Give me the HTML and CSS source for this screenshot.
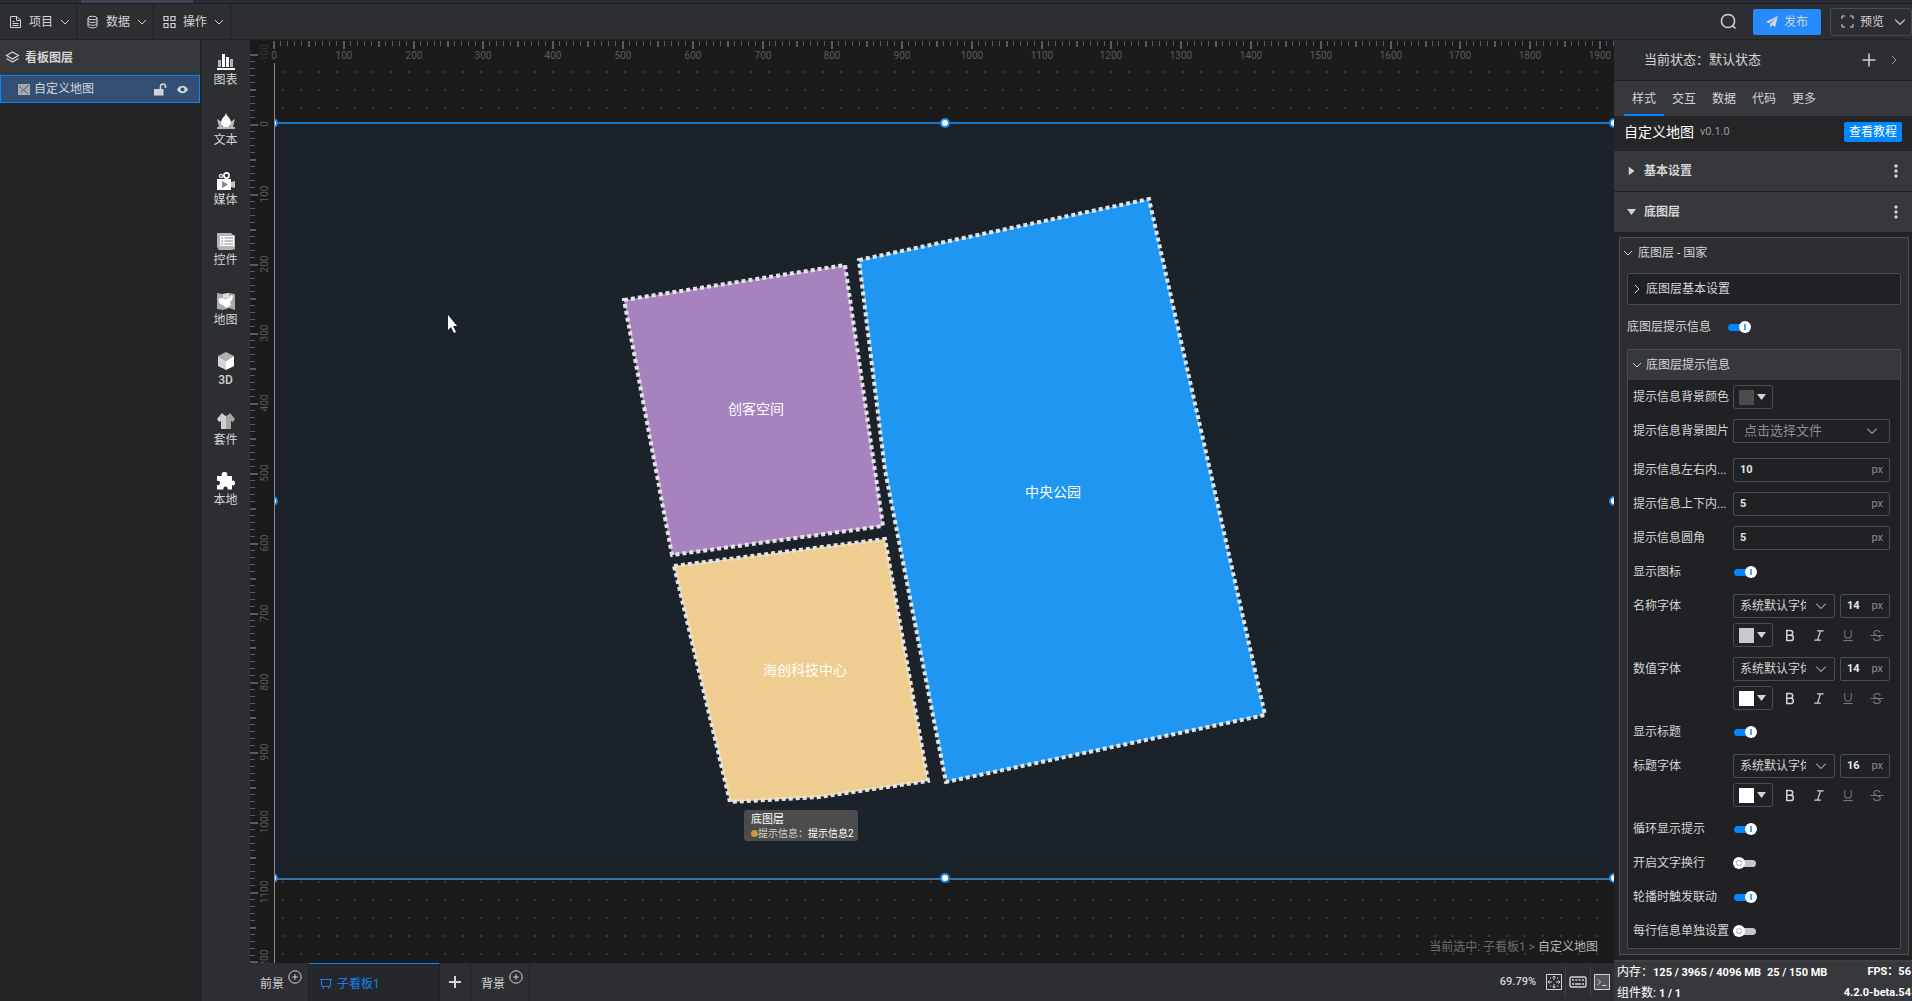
FILE: index.html
```html
<!DOCTYPE html>
<html lang="zh-CN">
<head>
    <meta charset="UTF-8">
    <meta name="viewport" content="width=device-width, initial-scale=1.0">
    <title>自定义地图</title>
    <link rel="stylesheet" href="styles.css">
</head>
<body>
    <!-- shared icons -->
    <svg class="sprite" aria-hidden="true">
        <symbol id="i-down" viewBox="0 0 10 10"><path d="M1 3l4 4 4-4" fill="none" stroke="currentColor"/></symbol>
        <symbol id="i-right" viewBox="0 0 10 10"><path d="M3 1l4 4-4 4" fill="none" stroke="currentColor"/></symbol>
        <symbol id="i-dots" viewBox="0 0 4 16"><circle cx="2" cy="3" r="1.7"/><circle cx="2" cy="8" r="1.7"/><circle cx="2" cy="13" r="1.7"/></symbol>
        <symbol id="i-tri" viewBox="0 0 9 6"><path d="M0 0h9L4.5 6z"/></symbol>
        <symbol id="i-plus-circle" viewBox="0 0 14 14"><circle cx="7" cy="7" r="6.2" fill="none" stroke="currentColor"/><path d="M7 4.3v5.4M4.3 7h5.4" stroke="currentColor"/></symbol>
        <symbol id="i-bold" viewBox="0 0 12 14"><path d="M2.5 1.5v11h4.2a2.9 2.9 0 0 0 0-5.8H2.5h3.8a2.6 2.6 0 0 0 0-5.2z" fill="none" stroke="currentColor" stroke-width="1.6"/></symbol>
        <symbol id="i-italic" viewBox="0 0 12 14"><path d="M4 2h7M1 12h7M7.6 2L4.4 12" fill="none" stroke="currentColor" stroke-width="1.3"/></symbol>
        <symbol id="i-under" viewBox="0 0 12 14"><path d="M2.5 1v5.5a3.5 3.5 0 0 0 7 0V1M1 12.5h10" fill="none" stroke="currentColor" stroke-width="1.1"/></symbol>
        <symbol id="i-strike" viewBox="0 0 14 14"><path d="M10.5 4C10 2.3 8.7 1.5 7 1.5S3.6 2.5 3.6 4.2c0 3.4 7 2.2 7 5.6 0 1.7-1.6 2.7-3.6 2.7S3.5 11.6 3.3 9.8M0 7h14" fill="none" stroke="currentColor" stroke-width="1.1"/></symbol>
    </svg>

    <div class="window-tabs"><span></span></div>

    <header class="topbar">
        <nav class="menus">
            <button class="menu">
                <svg width="13" height="14" viewBox="0 0 13 14" fill="none" stroke="currentColor"><path d="M1.5 1.5H8L11.5 5v7.5h-10zM7.5 1.5v4h4M3.5 6.5h2M3.5 8.5h6M3.5 10.5h6"/></svg>
                <span>项目</span><svg class="chev"><use href="#i-down"/></svg>
            </button>
            <button class="menu">
                <svg width="13" height="14" viewBox="0 0 13 14" fill="none" stroke="currentColor"><ellipse cx="6.5" cy="3" rx="4.5" ry="1.8"/><path d="M2 3v8c0 1 2 1.9 4.5 1.9S11 12 11 11V3M2 5.7c0 1 2 1.9 4.5 1.9S11 6.7 11 5.7M2 8.4c0 1 2 1.9 4.5 1.9S11 9.4 11 8.4"/></svg>
                <span>数据</span><svg class="chev"><use href="#i-down"/></svg>
            </button>
            <button class="menu">
                <svg width="13" height="14" viewBox="0 0 13 14" fill="none" stroke="currentColor" stroke-width="1.2"><path d="M1 1.5h4v4H1zM8 1.5h4v4H8zM1 8.5h4v4H1zM8 8.5h4v4H8z"/></svg>
                <span>操作</span><svg class="chev"><use href="#i-down"/></svg>
            </button>
        </nav>
        <div class="actions">
            <button class="search" aria-label="搜索">
                <svg width="17" height="17" viewBox="0 0 17 17" fill="none" stroke="currentColor" stroke-width="1.5"><circle cx="8" cy="8" r="6.6"/><path d="M12.5 12.5l3 3"/></svg>
            </button>
            <button class="publish">
                <svg width="12" height="12" viewBox="0 0 12 12" fill="currentColor"><path d="M11.8 0L0 5.8l2.8 1.5L9.6 2.5 4 8v3.8l2-2.5 3.2 1.6z"/></svg>
                发布
            </button>
            <button class="preview">
                <svg width="13" height="13" viewBox="0 0 13 13" fill="none" stroke="currentColor"><path d="M1 4V1h3M9 1h3v3M12 9v3H9M4 12H1V9"/></svg>
                预览<svg class="chev big"><use href="#i-down"/></svg>
            </button>
        </div>
    </header>

    <div class="workspace">
        <aside class="layers">
            <h2>
                <svg width="15" height="13" viewBox="0 0 15 13" fill="none" stroke="currentColor" stroke-width="1.2"><path d="M7.5 1l6 3.5-6 3.5-6-3.5zM1.5 7.5l6 3.5 6-3.5"/></svg>
                看板图层
            </h2>
            <div class="layer">
                <svg width="12" height="11" viewBox="0 0 12 11"><path d="M0 0h12v11H0z" fill="#a9a9a9"/><path d="M1 2l3 3M11 1L3 8M5 5l5 5" stroke="#4a5a70" fill="none"/></svg>
                <span>自定义地图</span>
                <button aria-label="锁定"><svg width="14" height="13" viewBox="0 0 14 13"><path d="M1 6h9.5v6.5H1z" fill="currentColor"/><path d="M7.5 6V3.5a2.5 2.5 0 0 1 5 0V5" fill="none" stroke="currentColor" stroke-width="1.6"/></svg></button>
                <button aria-label="显示"><svg width="11" height="9" viewBox="0 0 11 9"><path fill="currentColor" fill-rule="evenodd" d="M0 4.5C2.5-.5 8.5-.5 11 4.5 8.5 9.5 2.5 9.5 0 4.5zM5.5 2.5a2 2 0 1 0 0 4 2 2 0 0 0 0-4z"/></svg></button>
            </div>
        </aside>

        <nav class="rail">
            <button>
                <svg viewBox="0 0 18 18"><path d="M1 8h3v7H1zM13 7h3v8h-3z" fill="#b5b5b5"/><path d="M5 2h3v13H5zM9 5h3v10H9zM0 16h18v2H0z" fill="#fff"/></svg>图表
            </button>
            <button>
                <svg viewBox="0 0 18 18"><path d="M0 7l5 3v5H2zM18 7l-5 3v5h3z" fill="#b5b5b5"/><path d="M9 1l1 2.5c3 3 4 5 4 7.5l-2 4H6l-2-4c0-2.5 1-4.5 4-7.5z" fill="#fff"/><path d="M0 15h18v2H0z" fill="#b5b5b5"/></svg>文本
            </button>
            <button>
                <svg viewBox="0 0 18 18"><path d="M0 7h14v11H0z" fill="#fff"/><path d="M14 10l4-1v7l-4-1z" fill="#c4c4c4"/><circle cx="4" cy="4" r="1.6" fill="none" stroke="#ddd" stroke-width="1.4"/><circle cx="9.5" cy="3.5" r="2.6" fill="none" stroke="#fff" stroke-width="1.6"/><path d="M5 9l6 3.5L5 16z" fill="#888"/></svg>媒体
            </button>
            <button>
                <svg viewBox="0 0 18 18"><path d="M0 1h14l2 2h2v14l-3 1H2l-2-3z" fill="#b5b5b5"/><path d="M3 4h14v10H3z" fill="#fff"/><path d="M4 6h2M7.5 6H16M4 9h2M7.5 9H16M4 12h2M7.5 12H16" stroke="#888"/></svg>控件
            </button>
            <button>
                <svg viewBox="0 0 18 18"><path d="M0 1l6 1 6-1 6 1v16l-6-2-6 2-6-1z" fill="#a9a9a9"/><path d="M6 2l6-1v5H6z" fill="#ddd"/><path d="M1 7l4-1 3 1 4-1 2-3 2 1-1 4-2 2 1 3-3 2-2 1-3-3-3-1z" fill="#fff"/></svg>地图
            </button>
            <button>
                <svg viewBox="0 0 18 18"><path d="M9 0l8 4-8 5-8-5z" fill="#b0b0b0"/><path d="M1 4l8 5v9l-8-4z" fill="#d5d5d8"/><path d="M17 4L9 9v9l8-4z" fill="#fff"/></svg><b>3D</b>
            </button>
            <button>
                <svg viewBox="0 0 18 18"><path d="M5 1l2 2 2 1v13H4V9L2 10 0 7z" fill="#d0d0d3"/><path d="M13 1l-2 2-2 1v13h5V9l2 1 2-3z" fill="#a5a7a5"/></svg>套件
            </button>
            <button>
                <svg viewBox="0 0 18 18"><path d="M0 4h5c-1-2 0-4 2.5-4S11 2 10 4h5v5c2-1 3 0 3 2s-1 3-3 2v4.500h-4.500c.5-2-.5-3-2-3s-2.500 1-2 3H0V13c2 .5 3-.5 3-2S2 8.500 0 9z" fill="#fff"/></svg>本地
            </button>
        </nav>

        <main class="editor">
            <div class="canvas">
                <svg class="ruler-y" id="ruler-y"></svg>
                <svg class="ruler-x" id="ruler-x"></svg>
                <div class="stage">
                    <div class="board">
                        <svg class="map" viewBox="0 0 1339 758">
                            <g stroke="#e4e4e4" stroke-width="4" stroke-dasharray="4 3">
                                <path fill="#a682bf" d="M349 178L570 143 608 404 397 433z"/>
                                <path fill="#efcc8f" d="M399 444L610 417 653 659 544 675 455 680z"/>
                                <path fill="#1f97f2" d="M584 138L874 77 990 593 671 660 610 348z"/>
                            </g>
                            <g class="map-labels">
                                <text x="481" y="292">创客空间</text>
                                <text x="778" y="375">中央公园</text>
                                <text x="530" y="553">海创科技中心</text>
                            </g>
                            <path d="M173 193v15l3-3 3 6 2-1-3-6h4z" fill="#fff"/>
                        </svg>
                        <i class="handle tl"></i><i class="handle tc"></i><i class="handle tr"></i>
                        <i class="handle ml"></i><i class="handle mr"></i>
                        <i class="handle bl"></i><i class="handle bc"></i><i class="handle br"></i>
                        <div class="tooltip">
                            <b>底图层</b>
                            <p><i></i>提示信息：<span>提示信息2</span></p>
                        </div>
                    </div>
                    <p class="crumb">当前选中: 子看板1 &gt; <span>自定义地图</span></p>
                </div>
            </div>
            <footer class="boards">
                <button class="ground">前景<svg><use href="#i-plus-circle"/></svg></button>
                <button class="current">
                    <svg width="12" height="12" viewBox="0 0 12 12" fill="none" stroke="currentColor"><path d="M0 1.5h12M1.5 1.5v7h9v-7M4 8.5L3 11M8 8.5l1 2.5"/></svg>
                    子看板1
                </button>
                <button class="add" aria-label="新增"><svg width="12" height="12" viewBox="0 0 12 12"><path d="M6 0v12M0 6h12" stroke="currentColor" stroke-width="2"/></svg></button>
                <button class="ground">背景<svg><use href="#i-plus-circle"/></svg></button>
                <div class="view">
                    <span class="zoom">69.79%</span>
                    <button aria-label="适应"><svg width="16" height="16" viewBox="0 0 16 16" fill="none" stroke="currentColor"><path d="M.5.5h15v15H.5z"/><path d="M8 2v4M8 10v4M2 8h4M10 8h4M6.5 3.5L8 2l1.5 1.5M6.5 12.5L8 14l1.5-1.5M3.5 6.5L2 8l1.5 1.5M12.5 6.5L14 8l-1.5 1.5M4 4h1M11 4h1M4 12h1M11 12h1"/></svg></button>
                    <button aria-label="快捷键"><svg width="18" height="12" viewBox="0 0 18 12" fill="none" stroke="currentColor"><rect x="1" y="1" width="16" height="10" rx="1.5" stroke-width="1.4"/><path d="M3 4h12" stroke-width="1.6" stroke-dasharray="2 1.3"/><path d="M3 8h2M6 8h6M13 8h2" stroke-width="1.6"/></svg></button>
                    <button aria-label="控制台"><svg width="16" height="16" viewBox="0 0 16 16"><path d="M.5.5h15v15H.5z" fill="#55565a" stroke="currentColor"/><path d="M3.5 5l3 3-3 3M8 11.5h4.5" fill="none" stroke="currentColor"/></svg></button>
                </div>
            </footer>
        </main>

        <aside class="inspector">
            <div class="state">
                <span>当前状态：默认状态</span>
                <button aria-label="添加状态"><svg width="14" height="14" viewBox="0 0 14 14"><path d="M7 .5v13M.5 7h13" stroke="currentColor" stroke-width="1.5"/></svg></button>
                <button class="more" aria-label="展开"><svg class="chev"><use href="#i-right"/></svg></button>
            </div>
            <nav class="tabs">
                <button class="active">样式</button><button>交互</button><button>数据</button><button>代码</button><button>更多</button>
            </nav>
            <div class="title">
                <h1>自定义地图</h1><small>v0.1.0</small>
                <a href="#">查看教程</a>
            </div>
            <div class="section">
                <svg class="tri closed"><use href="#i-tri"/></svg>基本设置
                <button aria-label="更多"><svg width="4" height="16" fill="currentColor"><use href="#i-dots"/></svg></button>
            </div>
            <div class="section">
                <svg class="tri"><use href="#i-tri"/></svg>底图层
                <button aria-label="更多"><svg width="4" height="16" fill="currentColor"><use href="#i-dots"/></svg></button>
            </div>

            <div class="settings">
                <div class="group">
                    <h3><svg class="chev"><use href="#i-down"/></svg>底图层 - 国家</h3>
                    <div class="subgroup">
                        <h4><svg class="chev"><use href="#i-right"/></svg>底图层基本设置</h4>
                    </div>
                    <div class="row outer">
                        <label for="tip-on">底图层提示信息</label>
                        <input type="checkbox" class="switch" id="tip-on" checked>
                    </div>
                    <div class="subgroup tip">
                        <h4><svg class="chev"><use href="#i-down"/></svg>底图层提示信息</h4>
                        <div class="row">
                            <label for="tip-color">提示信息背景颜色</label>
                            <button class="color" id="tip-color"><i class="gray"></i><svg class="tri"><use href="#i-tri"/></svg></button>
                        </div>
                        <div class="row file">
                            <label for="tip-image">提示信息背景图片</label>
                            <div class="select"><select id="tip-image"><option>点击选择文件</option></select><svg class="chev"><use href="#i-down"/></svg></div>
                        </div>
                        <div class="row">
                            <label for="pad-x">提示信息左右内...</label>
                            <div class="number"><input type="text" id="pad-x" value="10"><span>px</span></div>
                        </div>
                        <div class="row">
                            <label for="pad-y">提示信息上下内...</label>
                            <div class="number"><input type="text" id="pad-y" value="5"><span>px</span></div>
                        </div>
                        <div class="row">
                            <label for="radius">提示信息圆角</label>
                            <div class="number"><input type="text" id="radius" value="5"><span>px</span></div>
                        </div>
                        <div class="row">
                            <label for="show-icon">显示图标</label>
                            <input type="checkbox" class="switch" id="show-icon" checked>
                        </div>
                        <div class="row">
                            <label for="name-font">名称字体</label>
                            <div class="font">
                                <div class="select"><select id="name-font"><option>系统默认字体</option></select><svg class="chev"><use href="#i-down"/></svg></div>
                                <div class="number"><input type="text" aria-label="名称字号" value="14"><span>px</span></div>
                                <div class="format">
                                    <button class="color" aria-label="颜色"><i class="light"></i><svg class="tri"><use href="#i-tri"/></svg></button>
                                    <button aria-label="加粗"><svg><use href="#i-bold"/></svg></button>
                                    <button aria-label="斜体"><svg><use href="#i-italic"/></svg></button>
                                    <button class="off" aria-label="下划线"><svg><use href="#i-under"/></svg></button>
                                    <button class="off" aria-label="删除线"><svg><use href="#i-strike"/></svg></button>
                                </div>
                            </div>
                        </div>
                        <div class="row">
                            <label for="value-font">数值字体</label>
                            <div class="font">
                                <div class="select"><select id="value-font"><option>系统默认字体</option></select><svg class="chev"><use href="#i-down"/></svg></div>
                                <div class="number"><input type="text" aria-label="数值字号" value="14"><span>px</span></div>
                                <div class="format">
                                    <button class="color" aria-label="颜色"><i></i><svg class="tri"><use href="#i-tri"/></svg></button>
                                    <button aria-label="加粗"><svg><use href="#i-bold"/></svg></button>
                                    <button aria-label="斜体"><svg><use href="#i-italic"/></svg></button>
                                    <button class="off" aria-label="下划线"><svg><use href="#i-under"/></svg></button>
                                    <button class="off" aria-label="删除线"><svg><use href="#i-strike"/></svg></button>
                                </div>
                            </div>
                        </div>
                        <div class="row">
                            <label for="show-title">显示标题</label>
                            <input type="checkbox" class="switch" id="show-title" checked>
                        </div>
                        <div class="row">
                            <label for="title-font">标题字体</label>
                            <div class="font">
                                <div class="select"><select id="title-font"><option>系统默认字体</option></select><svg class="chev"><use href="#i-down"/></svg></div>
                                <div class="number"><input type="text" aria-label="标题字号" value="16"><span>px</span></div>
                                <div class="format">
                                    <button class="color" aria-label="颜色"><i></i><svg class="tri"><use href="#i-tri"/></svg></button>
                                    <button aria-label="加粗"><svg><use href="#i-bold"/></svg></button>
                                    <button aria-label="斜体"><svg><use href="#i-italic"/></svg></button>
                                    <button class="off" aria-label="下划线"><svg><use href="#i-under"/></svg></button>
                                    <button class="off" aria-label="删除线"><svg><use href="#i-strike"/></svg></button>
                                </div>
                            </div>
                        </div>
                        <div class="row">
                            <label for="loop">循环显示提示</label>
                            <input type="checkbox" class="switch" id="loop" checked>
                        </div>
                        <div class="row">
                            <label for="wrap">开启文字换行</label>
                            <input type="checkbox" class="switch" id="wrap">
                        </div>
                        <div class="row">
                            <label for="linkage">轮播时触发联动</label>
                            <input type="checkbox" class="switch" id="linkage" checked>
                        </div>
                        <div class="row">
                            <label for="per-line">每行信息单独设置</label>
                            <input type="checkbox" class="switch" id="per-line">
                        </div>
                    </div>
                </div>
            </div>

            <div class="status">
                <p><span>内存：<b>125 / 3965 / 4096 MB</b>&nbsp; <b>25 / 150 MB</b></span><b>FPS：56</b></p>
                <p><span>组件数: <b>1 / 1</b></span><b>4.2.0-beta.54</b></p>
            </div>
        </aside>
    </div>
    <script src="rulers.js"></script>
</body>
</html>
```

FILE: styles.css
```css
* {
    box-sizing: border-box;
}
body {
    margin: 0;
    height: 100vh;
    display: flex;
    flex-direction: column;
    overflow: hidden;
    background: #1b1b1c;
    color: #d4d4d6;
    font-family: Roboto, "Noto Sans CJK SC", sans-serif;
    font-size: 12px;
    line-height: 16px;
}
h1, h2, h3, h4, p {
    margin: 0;
    font-size: 12px;
    font-weight: 400;
}
button {
    padding: 0;
    border: 0;
    background: none;
    color: inherit;
    font: inherit;
    cursor: pointer;
}
svg {
    flex: none;
    display: block;
}
.sprite {
    position: absolute;
    width: 0;
    height: 0;
}
.chev {
    width: 10px;
    height: 10px;
}
.chev.big {
    width: 12px;
    height: 12px;
}
.tri {
    width: 9px;
    height: 6px;
    fill: currentColor;
}

/* top */
.window-tabs {
    flex: none;
    height: 4px;
    background: #262d38;
    border-bottom: 1px solid #1c1d20;
}
.window-tabs span {
    display: block;
    width: 112px;
    height: 3px;
    margin-left: 81px;
    background: #3f4552;
}
.topbar {
    flex: none;
    height: 36px;
    display: flex;
    justify-content: space-between;
    background: #2d2e31;
    border-bottom: 1px solid #222326;
}
.menus {
    display: flex;
}
.menu {
    width: 77px;
    display: flex;
    align-items: center;
    padding-left: 9px;
    gap: 7px;
    border-right: 1px solid #1f2022;
}
.actions {
    display: flex;
    align-items: center;
}
.search {
    margin-right: 16px;
}
.publish {
    width: 68px;
    height: 26px;
    display: flex;
    align-items: center;
    justify-content: center;
    gap: 6px;
    margin-right: 9px;
    border-radius: 2px;
    background: #268bff;
}
.preview {
    width: 82px;
    height: 28px;
    display: flex;
    align-items: center;
    gap: 6px;
    padding-left: 10px;
    border: 1px solid #4a4b4e;
    border-radius: 3px;
}
.preview .chev {
    margin-left: 4px;
}
.workspace {
    flex: 1;
    min-height: 0;
    display: flex;
}

/* layer list */
.layers {
    flex: none;
    width: 201px;
    background: #242427;
    border-right: 1px solid #1f2022;
}
.layers h2 {
    height: 35px;
    display: flex;
    align-items: center;
    gap: 5px;
    padding-left: 5px;
    background: #37383c;
    font-weight: 700;
}
.layer {
    height: 28px;
    display: flex;
    align-items: center;
    gap: 10px;
    padding: 0 11px 0 17px;
    border: 1px solid #0086ff;
    background: #334f74;
}
.layer span {
    flex: 1;
    margin-left: -6px;
}

/* component rail */
.rail {
    flex: none;
    width: 49px;
    padding-top: 3px;
    background: #2d2e31;
}
.rail button {
    width: 49px;
    height: 60px;
    padding-top: 9px;
    display: flex;
    flex-direction: column;
    align-items: center;
    gap: 2px;
}
.rail svg {
    width: 18px;
    height: 18px;
}
.rail b {
    font-weight: 500;
}

/* canvas */
.editor {
    flex: 1;
    min-width: 0;
    display: flex;
    flex-direction: column;
}
.canvas {
    flex: 1;
    min-height: 0;
    display: grid;
    grid-template-columns: 25px 1fr;
    grid-template-rows: 23px 1fr;
}
.ruler-y {
    grid-area: 1 / 1 / 3 / 2;
    width: 25px;
    height: 100%;
    overflow: hidden;
}
.ruler-x {
    grid-area: 1 / 1 / 2 / 3;
    width: 100%;
    height: 23px;
    overflow: hidden;
}
.canvas > svg {
    fill: #5a5b5e;
    font-family: Roboto, sans-serif;
    font-size: 10px;
    text-anchor: middle;
}
.canvas .faded {
    opacity: .4;
}
.stage {
    grid-area: 2 / 2;
    position: relative;
    min-height: 0;
    overflow: hidden;
    margin-left: -1px;
    border-left: 1px solid #8a8a8a;
    padding-top: 59px;
    background: radial-gradient(circle at 9px 9px, #38393c 1.2px, transparent 1.2px) -1px 0 / 18px 18px;
}
.board {
    position: relative;
    border-top: 2px solid #1573c8;
    border-bottom: 2px solid #41729f;
    background: #1c222a;
}
.map {
    width: 100%;
    height: auto;
    margin: -2px 0;
}
.map-labels {
    fill: #fff;
    font-size: 14px;
    text-anchor: middle;
}
.handle {
    position: absolute;
    width: 10px;
    height: 10px;
    margin: -5px;
    border: 2px solid #1e88e5;
    border-radius: 50%;
    background: #fff;
}
.tl, .tc, .tr {
    top: -1px;
}
.ml, .mr {
    top: 50%;
}
.bl, .bc, .br {
    top: 100%;
}
.tl, .ml, .bl {
    left: -2px;
}
.tc, .bc {
    left: 50%;
}
.tr, .mr, .br {
    left: 100%;
}
.tooltip {
    position: absolute;
    left: 469px;
    top: 686px;
    width: 114px;
    height: 31px;
    padding: 2px 7px;
    border-radius: 3px;
    background: #4c4c4c;
    line-height: 13px;
    white-space: nowrap;
}
.tooltip b {
    display: block;
    color: #fff;
    font-size: 11px;
    line-height: 15px;
    font-weight: 400;
}
.tooltip p {
    display: flex;
    align-items: center;
    font-size: 10px;
}
.tooltip p i {
    flex: none;
    width: 7px;
    height: 7px;
    border-radius: 50%;
    background: #cf9735;
}
.tooltip p span {
    color: #fff;
}
.crumb {
    position: absolute;
    right: 16px;
    bottom: 8px;
    color: #6b6c6e;
}
.crumb span {
    color: #b4b4b6;
}

/* board tabs */
.boards {
    flex: none;
    height: 38px;
    display: flex;
    background: #2d2e31;
}
.boards > button {
    display: flex;
    align-items: center;
    border-right: 1px solid #1f2022;
}
.boards > .ground {
    width: 59px;
    padding: 3px 0 0 10px;
    gap: 4px;
}
.ground svg {
    width: 14px;
    height: 14px;
    margin-bottom: 14px;
}
.boards > .current {
    width: 131px;
    padding: 3px 0 0 11px;
    gap: 5px;
    border-top: 1px solid #0086ff;
    background: #26272b;
    color: #1283ee;
}
.boards .add {
    width: 31px;
    justify-content: center;
}
.view {
    margin-left: auto;
    display: flex;
    align-items: center;
    padding-right: 1px;
}
.view button {
    height: 30px;
    display: flex;
    align-items: center;
    padding: 0 3px;
    border-left: 1px solid #404144;
}
.view button:nth-of-type(1) {
    border: 0;
}
.zoom {
    margin-right: 7px;
    font-size: 11px;
    font-weight: 500;
}

/* inspector */
.inspector {
    flex: none;
    width: 298px;
    display: flex;
    flex-direction: column;
    background: #222225;
}
.state {
    flex: none;
    height: 41px;
    display: flex;
    align-items: center;
    padding: 0 13px 0 30px;
    background: #2d2e31;
    border-bottom: 1px solid #1f2022;
    font-size: 13px;
}
.state span {
    flex: 1;
}
.state .more {
    margin-left: 13px;
    color: #98999b;
}
.tabs {
    flex: none;
    height: 35px;
    display: flex;
    padding-left: 10px;
    background: #37383c;
}
.tabs button {
    width: 40px;
    padding-top: 3px;
    border-bottom: 2px solid transparent;
}
.tabs .active {
    border-color: #0086ff;
}
.title {
    flex: none;
    height: 35px;
    display: flex;
    align-items: center;
    gap: 6px;
    padding: 0 10px 3px;
    background: #252527;
}
.title h1 {
    color: #fff;
    font-size: 14px;
}
.title small {
    color: #98999b;
    font-size: 11px;
}
.title a {
    margin-left: auto;
    padding: 0 5px;
    border-radius: 2px;
    background: #0086ff;
    color: #fff;
    line-height: 20px;
    text-decoration: none;
}
.section {
    flex: none;
    height: 41px;
    display: flex;
    align-items: center;
    gap: 8px;
    padding: 0 14px 0 13px;
    background: #37383c;
    border-bottom: 1px solid #1f2022;
    font-weight: 700;
}
.section button {
    margin-left: auto;
}
.closed {
    transform: rotate(-90deg);
}
.settings {
    flex: 1;
    min-height: 0;
    overflow: hidden;
    padding: 4px 3px 0 5px;
}
.group {
    padding: 0 7px 5px;
    border: 1px solid #4b4c4f;
    background: #2d2e31;
}
.group h3, .group h4 {
    display: flex;
    align-items: center;
    gap: 5px;
}
.group h3 {
    height: 30px;
    margin: 0 0 5px -4px;
}
.subgroup {
    border: 1px solid #4b4c4f;
    border-radius: 2px;
    background: #202124;
}
.group h4 {
    height: 30px;
    padding-left: 4px;
    gap: 4px;
}
.tip h4 {
    background: #37383c;
}
.row {
    display: flex;
    align-items: flex-start;
    padding: 5px 10px 5px 5px;
}
.row.outer {
    padding: 10px 0;
}
.row.file {
    margin-bottom: 5px;
}
.row label {
    flex: none;
    width: 100px;
    line-height: 24px;
    white-space: nowrap;
}
.color {
    width: 40px;
    height: 24px;
    display: flex;
    align-items: center;
    gap: 3px;
    padding-left: 5px;
    border: 1px solid #4b4c4f;
    border-radius: 3px;
}
.color i {
    width: 15px;
    height: 15px;
    background: #fff;
}
.color .gray {
    background: #4c4c4c;
}
.color .light {
    background: #c9c9cb;
}
.select, .number {
    flex: 1;
    height: 24px;
    position: relative;
    display: flex;
    align-items: center;
    border: 1px solid #4b4c4f;
    border-radius: 2px;
}
.select select {
    appearance: none;
    width: 100%;
    height: 22px;
    padding: 0 28px 0 6px;
    border: 0;
    background: none;
    color: #d4d4d6;
    font: inherit;
}
.select .chev {
    position: absolute;
    right: 7px;
    width: 12px;
    height: 12px;
    color: #98999b;
    pointer-events: none;
}
.file select {
    padding-left: 10px;
    color: #8c8d90;
    font-size: 13px;
}
.file .select .chev {
    right: 11px;
}
.number input {
    flex: 1;
    width: 0;
    min-width: 0;
    padding: 0 0 0 6px;
    border: 0;
    background: none;
    color: #e6e6e8;
    font: inherit;
    font-size: 11px;
    font-weight: 700;
}
.number span {
    padding-right: 6px;
    color: #8c8d90;
    font-size: 11px;
}
.font {
    flex: 1;
    display: grid;
    grid-template-columns: 1fr 50px;
    gap: 5px;
}
.format {
    grid-column: 1 / 3;
    display: flex;
    align-items: center;
    gap: 15px;
}
.format .color {
    margin-right: -5px;
}
.format button:not(.color) svg {
    width: 14px;
    height: 13px;
}
.off {
    color: #77787a;
}

/* switch: thin track with a round knob */
.switch {
    appearance: none;
    position: relative;
    width: 24px;
    height: 12px;
    margin: 6px 0;
}
.switch::before, .switch::after {
    content: "";
    position: absolute;
}
.switch::before {
    left: 3px;
    top: 3px;
    width: 20px;
    height: 7px;
    border-radius: 4px;
    background: #c4c4ce;
}
.switch::after {
    left: 0;
    top: 0;
    width: 12px;
    height: 12px;
    border-radius: 50%;
    background: radial-gradient(circle, #fff 2px, #c4c4ce 2px 3px, #fff 3px);
}
.switch:checked::before {
    left: 1px;
    background: #0086ff;
}
.switch:checked::after {
    left: 12px;
    background: linear-gradient(#4da3ec, #4da3ec) center / 2px 6px no-repeat #fff;
}
.status {
    flex: none;
    height: 41px;
    padding: 0 1px 0 3px;
    border-top: 2px solid #3f4043;
    background: #37383c;
    color: #fff;
}
.status p {
    display: flex;
    justify-content: space-between;
    line-height: 20px;
}
.status b {
    font-size: 11px;
}
```

FILE: rulers.js
```js
// 100 canvas units take 69.79px at the current zoom
const STEP = 6.979;

function drawRuler(id, origin, vertical) {
    const ruler = document.getElementById(id);
    const box = ruler.getBoundingClientRect();
    const end = vertical ? box.height : box.width;
    let out = "";
    for (let i = -10; origin + i * STEP < end; i++) {
        const pos = Math.round(origin + i * STEP);
        if (pos < 10) continue;
        const big = i % 5 === 0;
        const len = i % 10 === 0 ? 8 : big ? 6 : 5;
        const size = big ? 2 : 1;
        if (vertical || i >= 0) {
            out += vertical
                ? `<rect x="0" y="${pos}" width="${len}" height="${size}"/>`
                : `<rect x="${pos - 1}" y="1" width="${size}" height="${len}"/>`;
        }
        if (i % 10 === 0) {
            out += vertical
                ? `<text class="${i < 0 ? "faded" : ""}" transform="translate(18 ${pos}) rotate(-90)">${i * 10}</text>`
                : `<text x="${pos}" y="19">${i * 10}</text>`;
        }
    }
    ruler.innerHTML = out;
}

drawRuler("ruler-x", 24, false);
drawRuler("ruler-y", 84, true);
```
